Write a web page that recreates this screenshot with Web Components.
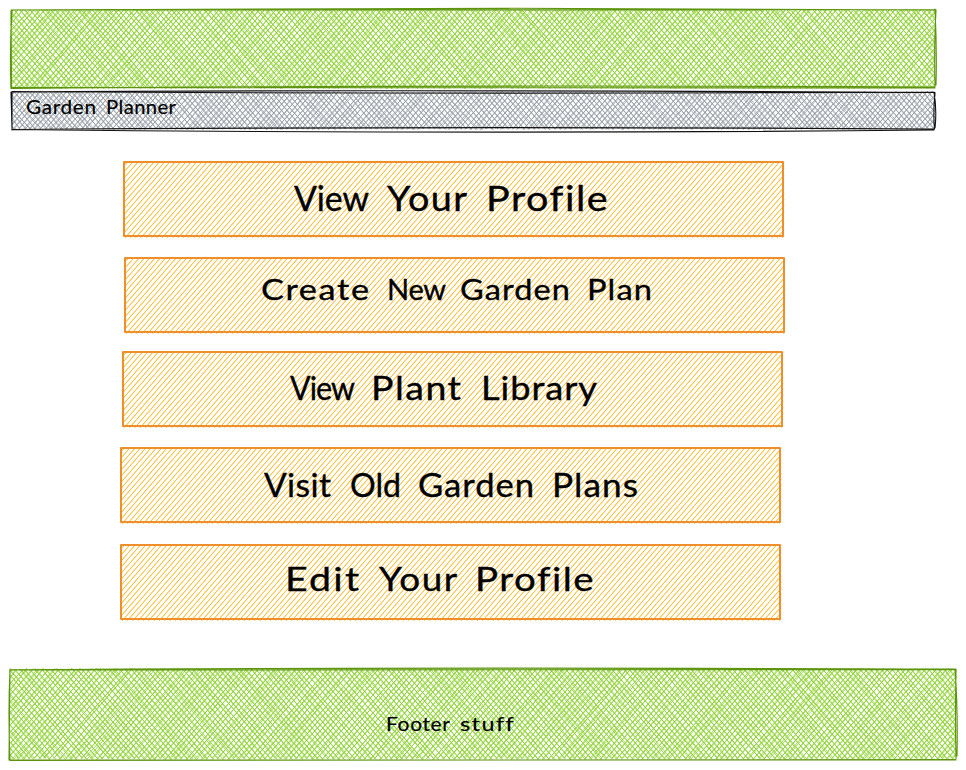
<!DOCTYPE html>
<html lang="en">
<head>
<meta charset="utf-8">
<title>Garden Planner</title>
<style>
html,body{margin:0;background:#fff}
body{height:770px;overflow:hidden;font-family:Lato,"Open Sans",sans-serif;color:#000}
</style>
</head>
<body>
<garden-page></garden-page>
<script>
// Small deterministic generator keeps the hand-drawn strokes stable between loads.
function rng(seed){let s=seed*7919+17;return()=>{s=(s*1664525+1013904223)%4294967296;return s/4294967296}}

class SketchBox extends HTMLElement{
  connectedCallback(){
    const w=+this.getAttribute('w'),h=+this.getAttribute('h');
    const root=this.attachShadow({mode:'open'});
    const cross=this.hasAttribute('cross');
    const r=rng(+this.getAttribute('seed')||1);
    const a=49*Math.PI/180,k=1/Math.tan(a),step=cross?5.25:5.3;
    const jit=cross?.95:.1;
    const j=m=>(r()-.5)*2*m;
    let d='';
    const hatch=dir=>{
      for(let c=2;c<w+h*k;c+=step){
        // A stroke meets the bottom edge at c-h*k and the top edge at c.
        let x1=c-h*k,y1=h,x2=c,y2=0;
        if(x1<0){y1=h+x1/k;x1=0}
        if(x2>w){y2=(x2-w)/k;x2=w}
        for(let n=0;n<2;n++){
          const p=[x1+j(jit),y1+j(jit)+(cross?0:1.6),x2+j(jit)+(cross?0:1),y2+j(jit)+(cross?0:.6)];
          const mx=(p[0]+p[2])/2+j(jit*.8),my=(p[1]+p[3])/2+j(jit*.8);
          const f=x=>(dir>0?x:w-x).toFixed(2);
          d+=`M${f(p[0])} ${p[1].toFixed(2)}Q${f(mx)} ${my.toFixed(2)} ${f(p[2])} ${p[3].toFixed(2)}`;
        }
      }
    };
    hatch(1); if(cross)hatch(-1);
    const outline=this.getAttribute('outline')||`M0 0H${w}V${h}H0Z`;
    root.innerHTML=`<style>
      :host{display:block;position:relative;box-sizing:border-box;width:${w}px;height:${h}px}
      svg{position:absolute;left:0;top:0;overflow:visible;pointer-events:none}
      .content{position:relative}
    </style>
    <svg width="${w}" height="${h}" fill="none" aria-hidden="true">
      <path d="${d}" stroke="var(--fill)" stroke-width="var(--hatch,.6)"/>
      <path d="${outline}" stroke="var(--line)" stroke-width="var(--edge,1)" stroke-linecap="round" stroke-linejoin="round"/>
    </svg><div class="content"><slot></slot></div>`;
  }
}
customElements.define('sketch-box',SketchBox);

class SketchLabel extends HTMLElement{
  connectedCallback(){
    const widths=this.getAttribute('widths').split(' ').map(Number);
    const gaps=this.getAttribute('gaps').split(' ').map(Number);
    const size=+this.getAttribute('size');
    const ctx=document.createElement('canvas').getContext('2d');
    ctx.font=`${size}px Lato`;
    const words=this.getAttribute('text').split(' ');
    this.attachShadow({mode:'open'}).innerHTML=`<style>
      :host{display:block;font-size:${size}px;line-height:${size>25?40:24}px;white-space:pre;-webkit-text-stroke:${size>25?.35:.15}px #000}
      .word{display:inline-block;white-space:pre;transform-origin:0 50%}
    </style>`+words.map((t,i)=>{
      // Widen the letters for most of the difference, and space them for the rest.
      const natural=ctx.measureText(t).width;
      const scale=Math.pow(widths[i]/natural,.65);
      const s=(widths[i]/scale-natural)/(t.length-1);
      const gap=i<words.length-1?gaps[i]:0;
      return `<span class="word" style="letter-spacing:${s.toFixed(2)}px;width:${widths[i]+gap}px;transform:scaleX(${scale.toFixed(3)})">${t} </span>`;
    }).join('');
  }
}
customElements.define('sketch-label',SketchLabel);

class GardenPage extends HTMLElement{
  connectedCallback(){
    this.attachShadow({mode:'open'}).innerHTML=`<style>
      :host{display:flow-root;width:966px;height:770px}
      .green{--fill:#8fd334;--line:#5c940d;--hatch:.85;--edge:1.15}
      header{padding:10px 0 0 11px}
      nav{padding:4px 0 0 12px}
      .bar{--fill:#9299a1;--line:#111;--hatch:.75;--edge:1.1}
      .bar sketch-label{padding:3px 0 0 14px}
      main{display:flow-root}
      main sketch-box{--fill:#fbb823;--line:#ee8f2b;--hatch:.75;--edge:2}
      footer{padding:50px 0 0 10px}
      footer sketch-label{padding:43px 0 0 376px}
    </style>
    <header><sketch-box class="green" cross seed="3" w="924" h="78" outline="M1 0Q300 -2 500 -1.7T925 0M0 0Q400 -.6 925 -.3M925 0Q923 35 924 77M924 -1Q926 40 925 75M924 78Q460 76 0 77.5M923 77Q400 74.5 0 78.5M0 78Q-1.5 40 1 0M.5 78L0 1"></sketch-box></header>
    <nav><sketch-box class="bar" cross seed="7" w="923" h="37" outline="M0 0Q350 -2.7 923 .5M0 -.5Q460 2.5 922 0M923 .5Q921 20 922.5 37M922 0Q925 18 923 36M922 38Q480 42.5 0 37.5M922 37Q450 34 0 37.5M0 37L-1 0M0 38L0 0"><sketch-label text="Garden Planner" size="19" widths="70 70" gaps="10"></sketch-label></sketch-box></nav>
    <main>
      <sketch-box seed="1" w="659" h="74" style="margin:33px 0 0 124px"><sketch-label style="padding:16px 0 0 170px" text="View Your Profile" size="34" widths="75 80 121" gaps="18 19"></sketch-label></sketch-box>
      <sketch-box seed="2" w="659" h="74" style="margin:22px 0 0 125px"><sketch-label style="padding:11px 0 0 136px" text="Create New Garden Plan" size="29.5" widths="108 59 110 65" gaps="18 14 17"></sketch-label></sketch-box>
      <sketch-box seed="3" w="659" h="74" style="margin:20px 0 0 123px"><sketch-label style="padding:15px 0 0 167px" text="View Plant Library" size="33" widths="65 90 116" gaps="16 20"></sketch-label></sketch-box>
      <sketch-box seed="4" w="659" h="74" style="margin:22px 0 0 121px"><sketch-label style="padding:17px 0 0 143px" text="Visit Old Garden Plans" size="32" widths="67 51 116 86" gaps="19 17 18"></sketch-label></sketch-box>
      <sketch-box seed="5" w="659" h="74" style="margin:23px 0 0 121px"><sketch-label style="padding:13px 0 0 164px" text="Edit Your Profile" size="33" widths="74 78 118" gaps="20 18"></sketch-label></sketch-box>
    </main>
    <footer><sketch-box class="green" cross seed="11" w="946" h="90" outline="M0 .8Q350 -2 946 0M0 1Q500 2 946 .5M946 0Q945 50 946 90M945 0Q948 40 947 87M946 91Q450 92 0 91M945 90.5Q500 92 0 91.5M0 91Q-2 45 0 0M-1 91L0 0"><sketch-label text="Footer stuff" size="19" widths="64 53" gaps="10"></sketch-label></sketch-box></footer>`;
  }
}
customElements.define('garden-page',GardenPage);
</script>
</body>
</html>
